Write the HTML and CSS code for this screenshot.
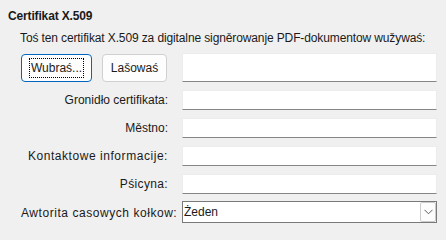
FILE: index.html
```html
<!DOCTYPE html>
<html>
<head>
<meta charset="utf-8">
<link rel="stylesheet" href="styles.css">
</head>
<body>
<div class="panel">
  <div class="title">Certifikat X.509</div>
  <div class="desc">Toś ten certifikat X.509 za digitalne signěrowanje PDF-dokumentow wužywaś:</div>
  <div class="form">
    <div class="buttons">
      <button class="btn btn-default"><span class="focus">Wubraś...</span></button>
      <button class="btn">Lašowaś</button>
    </div>
    <div class="field field-tall"></div>

    <label class="label">Gronidło certifikata:</label>
    <div class="field"></div>

    <label class="label">Městno:</label>
    <div class="field"></div>

    <label class="label label-wide">Kontaktowe informacije:</label>
    <div class="field"></div>

    <label class="label label-mid">Pśicyna:</label>
    <div class="field"></div>

    <label class="label label-wide">Awtorita casowych kołkow:</label>
    <div class="combo">
      <span class="combo-text">Żeden</span>
      <span class="combo-btn">
        <svg width="9" height="6" viewBox="0 0 9 6"><path d="M0.5 0.8 L4.5 4.8 L8.5 0.8" fill="none" stroke="#5f5f5f" stroke-width="1"/></svg>
      </span>
    </div>
  </div>
</div>
</body>
</html>
```
FILE: styles.css
```css
html, body {
  margin: 0;
  padding: 0;
  background: #f0f0f0;
}
body {
  font-family: "Liberation Sans", Arial, sans-serif;
  font-size: 12px;
  color: #1a1a1a;
  width: 446px;
  height: 231px;
  overflow: hidden;
}
.panel {
  padding: 8px 9px 0 8px;
}
.title {
  font-weight: bold;
  line-height: 16px;
  height: 16px;
  letter-spacing: -0.15px;
}
.desc {
  margin-top: 6px;
  margin-left: 12px;
  line-height: 16px;
  height: 16px;
  white-space: nowrap;
  letter-spacing: -0.12px;
}
.form {
  margin-top: 7px;
  margin-left: 13px;
  display: grid;
  grid-template-columns: 146px 255px;
  column-gap: 15px;
  row-gap: 8px;
  align-items: center;
}
.buttons {
  display: flex;
  gap: 10px;
  height: 28px;
  align-items: stretch;
}
.btn {
  font-family: inherit;
  font-size: 12px;
  color: #1a1a1a;
  background: #fdfdfd;
  border: 1px solid #d0d0d0;
  border-radius: 4px;
  padding: 0;
  width: 65px;
  height: 28px;
  display: flex;
  align-items: center;
  justify-content: center;
}
.btn-default {
  width: 71px;
  border-color: #0067c0;
}
.focus {
  outline: 1px dotted #000;
  padding: 2px 1px;
  line-height: 14px;
}
.label {
  text-align: right;
  line-height: 16px;
  margin-right: -1px;
  white-space: nowrap;
}
.label-wide {
  letter-spacing: 0.55px;
}
.label-mid {
  letter-spacing: 0.35px;
}
.field {
  height: 20px;
  background: #fff;
  border: 1px solid #ececec;
  border-bottom-color: #868686;
  box-sizing: border-box;
}
.field-tall {
  height: 29px;
}
.combo {
  margin-top: -1px;
  height: 22px;
  box-sizing: border-box;
  background: #fff;
  border: 1px solid #7a7a7a;
  display: flex;
  align-items: center;
  justify-content: space-between;
}
.combo-text {
  padding-left: 1px;
  line-height: 16px;
}
.combo-btn {
  width: 16px;
  height: 20px;
  box-sizing: border-box;
  border: 1px solid #cccccc;
  border-radius: 2px;
  background: #fdfdfd;
  display: flex;
  align-items: center;
  justify-content: center;
}
```
